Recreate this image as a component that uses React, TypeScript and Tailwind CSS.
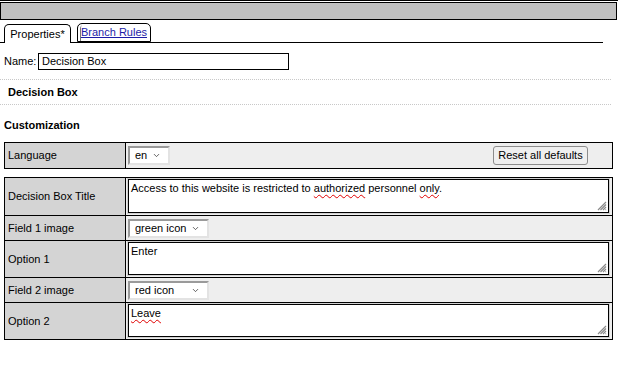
import { ChevronDown } from 'lucide-react'

const font = "font-['Liberation_Sans',Arial,sans-serif]"

function Select({ value, width }: { value: string; width: string }) {
  return (
    <div
      className={`${width} h-[19px] flex items-center justify-between bg-white border-2 border-t-[#9a9a9a] border-l-[#9a9a9a] border-r-[#e3e3e3] border-b-[#e3e3e3] pl-[5px] pr-[7px]`}
    >
      <span>{value}</span>
      <ChevronDown size={9} strokeWidth={2} className="text-[#333]" />
    </div>
  )
}

function Grip() {
  return (
    <svg width="11" height="11" viewBox="0 0 11 11" className="absolute right-[1px] bottom-[1px]">
      <path d="M10 2 L2 10 M10 4.5 L4.5 10 M10 7 L7 10 M10 9.5 L9.5 10" stroke="#8a8a8a" strokeWidth="1.2" />
    </svg>
  )
}

function TextBox({ children, height }: { children: React.ReactNode; height: string }) {
  return (
    <div
      className={`relative ${height} ml-[2px] mr-[3px] border border-black bg-white shadow-[0_0_0_1px_#d0d0d0] px-[2px] pt-[2px] leading-[13px]`}
    >
      {children}
      <Grip />
    </div>
  )
}

const spell = 'underline decoration-wavy decoration-[#e00000] decoration-1 underline-offset-[2px]'

export default function App() {
  return (
    <div className={`${font} w-[618px] h-[380px] bg-white text-[11px] text-black overflow-hidden`}>
      {/* Header bar */}
      <div className="border-t border-black pt-px">
        <div className="w-[617px] h-[18px] border border-black bg-[#c0c0c0]" />
      </div>

      {/* Tabs */}
      <div className="mt-[3px] w-[603px] h-[20px] flex items-end gap-[6px] pl-[4px] border-b border-black">
        <div className="-mb-px h-[19px] w-[67px] flex items-center justify-center bg-white border border-b-0 border-black rounded-t-[5px]">
          Properties*
        </div>
        <div className="h-[19px] w-[74px] flex items-center justify-center bg-white border border-black rounded-t-[5px] shadow-[inset_2px_1px_0_#fff,inset_3px_0_0_#777]">
          <a href="#" className="underline text-[#1c1ca8]">
            Branch Rules
          </a>
        </div>
      </div>

      {/* Name */}
      <div className="mt-[10px] flex items-center pl-[4px] h-[17px]">
        <span className="w-[34px]">Name:</span>
        <div className="w-[251px] h-[17px] border border-black flex items-center pl-[3px]">Decision Box</div>
      </div>

      {/* Title section */}
      <div className="mt-[9px] w-[611px] border-t border-b border-dotted border-[#c8c8c8] h-[26px] flex items-center pl-[8px] font-bold">
        Decision Box
      </div>

      <div className="pl-[4px] mt-[14px] font-bold leading-[13px]">Customization</div>

      {/* Language table */}
      <div className="ml-[4px] mt-[10px] w-[609px] flex border border-black h-[27px]">
        <div className="w-[121px] border-r border-black bg-[#d4d4d4] flex items-center pl-[3px]">Language</div>
        <div className="flex-1 bg-[#eeeeee] flex items-center justify-between pl-[2px] pr-[24px]">
          <Select value="en" width="w-[42px]" />
          <button className="h-[19px] w-[95px] rounded-[3px] border border-[#8c8c8c] bg-[#efefef] text-[11px] text-black">
            Reset all defaults
          </button>
        </div>
      </div>

      {/* Fields table */}
      <div className="ml-[4px] mt-[8px] w-[609px] border border-black">
        <div className="flex h-[37px]">
          <div className="w-[121px] border-r border-black bg-[#d4d4d4] flex items-center pl-[3px]">Decision Box Title</div>
          <div className="flex-1 bg-[#eeeeee] pt-px">
            <TextBox height="h-[34px]">
              Access to this website is restricted to <span className={spell}>authorized</span> personnel{' '}
              <span className={spell}>only</span>.
            </TextBox>
          </div>
        </div>
        <div className="flex h-[25px] border-t border-black">
          <div className="w-[121px] border-r border-black bg-[#d4d4d4] flex items-center pl-[3px]">Field 1 image</div>
          <div className="flex-1 bg-[#eeeeee] flex items-center pl-[2px]">
            <Select value="green icon" width="w-[81px]" />
          </div>
        </div>
        <div className="flex h-[37px] border-t border-black">
          <div className="w-[121px] border-r border-black bg-[#d4d4d4] flex items-center pl-[3px]">Option 1</div>
          <div className="flex-1 bg-[#eeeeee] pt-px">
            <TextBox height="h-[33px]">Enter</TextBox>
          </div>
        </div>
        <div className="flex h-[25px] border-t border-black">
          <div className="w-[121px] border-r border-black bg-[#d4d4d4] flex items-center pl-[3px]">Field 2 image</div>
          <div className="flex-1 bg-[#eeeeee] flex items-center pl-[2px]">
            <Select value="red icon" width="w-[81px]" />
          </div>
        </div>
        <div className="flex h-[37px] border-t border-black">
          <div className="w-[121px] border-r border-black bg-[#d4d4d4] flex items-center pl-[3px]">Option 2</div>
          <div className="flex-1 bg-[#eeeeee] pt-px">
            <TextBox height="h-[33px]">
              <span className={spell}>Leave</span>
            </TextBox>
          </div>
        </div>
      </div>
    </div>
  )
}
